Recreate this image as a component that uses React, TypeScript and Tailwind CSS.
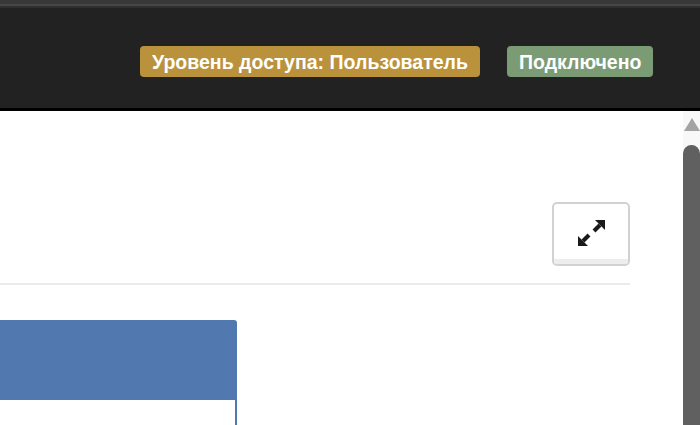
import React from "react";

function ExpandIcon() {
  return (
    <svg width="29" height="28" viewBox="0 0 29 28" fill="#1a1a1a">
      <path d="M28 1 L28 11 L18 1 Z" />
      <line x1="23" y1="6" x2="17" y2="12" stroke="#1a1a1a" strokeWidth="4" />
      <path d="M1 27 L1 17 L11 27 Z" />
      <line x1="6" y1="22" x2="12" y2="16" stroke="#1a1a1a" strokeWidth="4" />
    </svg>
  );
}

export default function App() {
  return (
    <div
      className="w-[700px] h-[425px] overflow-hidden bg-white flex flex-col"
      style={{ fontFamily: '"Liberation Sans", Arial, sans-serif' }}
    >
      <div className="h-[8px] bg-[#3b3b3b] flex flex-col">
        <div className="h-[4px] bg-[#383838]" />
        <div className="h-[2px] bg-[#474747]" />
        <div className="h-[2px] bg-[#2e2e2e]" />
      </div>
      <div className="h-[103px] bg-[#222222] border-b-[3px] border-black flex justify-end items-start pt-[38px] pr-[47px] gap-[27px]">
        <div className="w-[340px] h-[31px] pl-[12px] rounded-[4px] bg-[#ba923c] text-white font-bold text-[21px] flex items-center leading-none overflow-hidden">
          <span className="inline-block whitespace-nowrap origin-left scale-x-[0.93]">
            Уровень доступа: Пользователь
          </span>
        </div>
        <div className="w-[146px] h-[31px] pl-[12px] rounded-[4px] bg-[#7b9b75] text-white font-bold text-[21px] flex items-center leading-none overflow-hidden">
          <span className="inline-block whitespace-nowrap origin-left scale-x-[0.93]">
            Подключено
          </span>
        </div>
      </div>
      <div className="flex-1 flex min-h-0">
        <div className="flex-1 flex flex-col">
          <div className="flex justify-end pr-[53px] pt-[91px]">
            <div className="w-[78px] h-[64px] border-2 border-[#d2d2d2] rounded-[5px] bg-white flex flex-col overflow-hidden">
              <div className="flex-1 flex items-center justify-center pl-[1px] pt-[2px]">
                <ExpandIcon />
              </div>
              <div className="h-[5px] bg-[#ededed]" />
            </div>
          </div>
          <div className="mt-[17px] mr-[53px] h-[2px] bg-[#ebebeb]" />
          <div className="mt-[35px] w-[237px] flex-1 flex flex-col rounded-tr-[3px] overflow-hidden">
            <div className="h-[80px] bg-[#5179b0]" />
            <div className="flex-1 bg-white border-r-2 border-[#5179b0]" />
          </div>
        </div>
        <div className="w-[17px] bg-[#f8f8f8] flex flex-col items-center">
          <div className="mt-[7px] w-0 h-0 border-l-[8px] border-r-[8px] border-b-[13px] border-l-transparent border-r-transparent border-b-[#a3a3a3]" />
          <div className="mt-[14px] w-[17px] flex-1 bg-[#606060] rounded-t-[9px]" />
        </div>
      </div>
    </div>
  );
}
